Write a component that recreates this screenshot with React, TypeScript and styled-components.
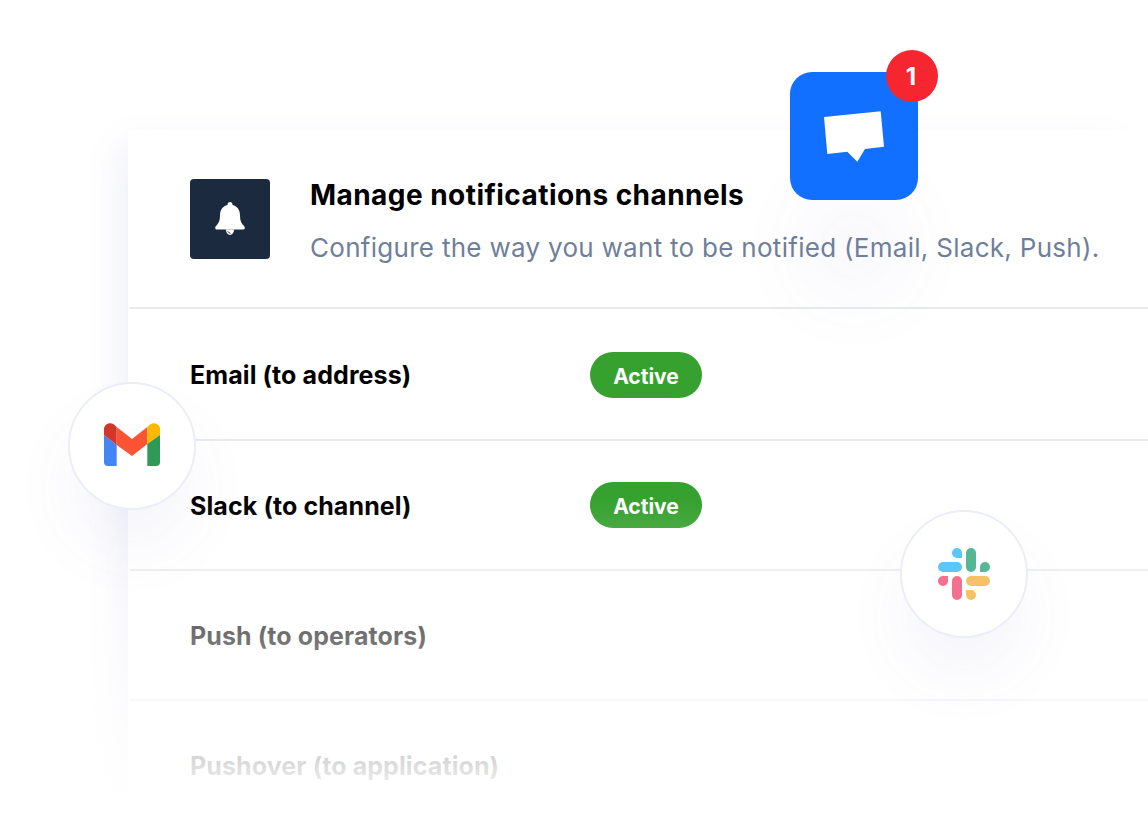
import React from "react";
import styled, { createGlobalStyle } from "styled-components";

const Global = createGlobalStyle`
  html, body { margin: 0; padding: 0; background: #fff; }
  body { font-family: Inter, "Liberation Sans", sans-serif; }
`;

const Page = styled.div`
  position: relative;
  width: 1148px;
  height: 820px;
  overflow: hidden;
  background: #fff;
  padding: 130px 0 0 128px;
  box-sizing: border-box;
`;

const Card = styled.section`
  display: flex;
  flex-direction: column;
  height: 760px;
  padding-left: 2px;
  background: #fff;
  box-shadow: -20px 0 36px -16px rgba(95, 105, 190, 0.12);
`;

const Header = styled.header`
  display: flex;
  align-items: flex-start;
  gap: 40px;
  height: 177px;
  padding: 49px 0 0 60px;
  box-sizing: border-box;
`;

const IconTile = styled.div`
  flex: none;
  display: flex;
  align-items: center;
  justify-content: center;
  width: 80px;
  height: 80px;
  border-radius: 4px;
  background: #1c2a40;
`;

const HeaderText = styled.div`
  display: flex;
  flex-direction: column;
  gap: 21px;
  white-space: nowrap;
`;

const Title = styled.h1`
  margin: 0;
  font-size: 28px;
  line-height: 32px;
  letter-spacing: 0.45px;
  font-weight: 700;
  color: #000;
`;

const Subtitle = styled.p`
  margin: 0;
  font-size: 26px;
  line-height: 32px;
  letter-spacing: 0.29px;
  font-weight: 400;
  color: #6f7f9b;
`;

const Row = styled.div<{ $h: number; $pt?: number }>`
  display: flex;
  align-items: center;
  height: ${(p) => p.$h}px;
  box-sizing: border-box;
  border-top: 2px solid #e8eaf0;
  padding: ${(p) => p.$pt ?? 0}px 0 0 60px;
`;

const Label = styled.div<{ $mt: number }>`
  width: 400px;
  flex: none;
  margin-top: ${(p) => p.$mt}px;
  font-size: 25px;
  line-height: 30px;
  letter-spacing: 0.1px;
  font-weight: 700;
  color: #000;
`;

const Badge = styled.span`
  display: flex;
  align-items: center;
  justify-content: center;
  width: 112px;
  height: 46px;
  box-sizing: border-box;
  padding-top: 2px;
  border-radius: 23px;
  background: #36a12f;
  color: #fff;
  font-size: 21px;
  font-weight: 700;
`;

const Fade = styled.div`
  position: absolute;
  left: 0;
  right: 0;
  top: 500px;
  height: 320px;
  background: linear-gradient(to bottom, rgba(255,255,255,0) 0, rgba(255,255,255,1) 96%);
  pointer-events: none;
`;

const AppTile = styled.div`
  position: absolute;
  left: 790px;
  top: 72px;
  width: 128px;
  height: 128px;
  border-radius: 22px;
  background: #1170ff;
  display: flex;
  align-items: center;
  justify-content: center;
  box-shadow: 0 110px 80px -18px rgba(95, 105, 190, 0.06);
`;

const Counter = styled.div`
  position: absolute;
  left: 96px;
  top: -22px;
  width: 52px;
  height: 52px;
  box-sizing: border-box;
  padding-right: 2px;
  border-radius: 50%;
  background: #f5262f;
  color: #fff;
  font-size: 24px;
  font-weight: 700;
  display: flex;
  align-items: center;
  justify-content: center;
`;

const Round = styled.div<{ $x: number; $y: number }>`
  position: absolute;
  left: ${(p) => p.$x}px;
  top: ${(p) => p.$y}px;
  width: 128px;
  height: 128px;
  box-sizing: border-box;
  border-radius: 50%;
  background: #fff;
  border: 2px solid #eceef7;
  display: flex;
  align-items: center;
  justify-content: center;
  box-shadow: 0 40px 70px -6px rgba(95, 105, 190, 0.07);
`;

const GmailMark = styled.svg`
  margin-bottom: 3px;
`;

const Bell = () => (
  <svg width="30" height="34" viewBox="0 0 30 34" aria-hidden="true">
    <path
      fill="#fff"
      d="M15 0c1.4 0 2.500 1.100 2.500 2.600v.5C22.600 4.300 25 8.500 25 13.500c0 5 1.200 8 4.200 10.700.9.800 1 3.300-.9 3.300H1.700c-1.900 0-1.800-2.500-.9-3.300C3.800 21.500 5 18.500 5 13.500c0-5 2.400-9.200 7.500-10.400v-.5C12.500 1.100 13.600 0 15 0z"
    />
    <path fill="#fff" d="M10.800 27.500h8.400c-.3 3.300-2.100 5.500-4.200 5.500s-3.900-2.200-4.200-5.500z" />
    <path fill="none" stroke="#1c2a40" strokeWidth="1" d="M12.800 29.300c.5 1 1.300 1.700 2.600 2" />
  </svg>
);

const Chat = () => (
  <svg width="60" height="51" viewBox="0 0 60 50.400" aria-hidden="true">
    <path fill="#fff" d="M0 5.700 56.700 0 60 35.400 41 37.700 33.300 50.400 23.300 40.400 3.300 42.700z" />
  </svg>
);

const Gmail = () => (
  <GmailMark width="56" height="43" viewBox="0 0 56 43" aria-hidden="true">
    <path fill="#4285f4" d="M0 12 12.700 22V43H4a4 4 0 0 1-4-4z" />
    <path fill="#d1372a" d="M0 12V6C0 1 6-1.500 10 1.500L12.700 4V22z" />
    <path fill="#fb5434" d="M12.700 4 28 16 43.300 4V21L28 33 12.700 22z" />
    <path fill="#fdb900" d="M43.300 4 46 1.500C50-1.500 56 1 56 6V12L43.300 21z" />
    <path fill="#2f9a58" d="M43.300 21 56 12V39a4 4 0 0 1-4 4H43.300z" />
  </GmailMark>
);

const Slack = () => (
  <svg width="52" height="52" viewBox="0 0 52 52" aria-hidden="true">
    <rect fill="#5cc6f5" x="0" y="14" width="24" height="10" rx="5" />
    <path fill="#5cc6f5" d="M19 0a5 5 0 0 1 5 5v5h-5a5 5 0 0 1 0-10z" />
    <rect fill="#56b794" x="28" y="0" width="10" height="24" rx="5" />
    <path fill="#56b794" d="M52 19a5 5 0 0 1-5 5h-5v-5a5 5 0 0 1 10 0z" />
    <rect fill="#f5708f" x="14" y="28" width="10" height="24" rx="5" />
    <path fill="#f5708f" d="M0 33a5 5 0 0 1 5-5h5v5a5 5 0 0 1-10 0z" />
    <rect fill="#f7c265" x="28" y="28" width="24" height="10" rx="5" />
    <path fill="#f7c265" d="M33 52a5 5 0 0 1-5-5v-5h5a5 5 0 0 1 0 10z" />
  </svg>
);

export default function App() {
  return (
    <Page>
      <Global />
      <Card>
        <Header>
          <IconTile>
            <Bell />
          </IconTile>
          <HeaderText>
            <Title>Manage notifications channels</Title>
            <Subtitle>Configure the way you want to be notified (Email, Slack, Push).</Subtitle>
          </HeaderText>
        </Header>
        <Row $h={132} $pt={2}>
          <Label $mt={0}>Email (to address)</Label>
          <Badge>Active</Badge>
        </Row>
        <Row $h={130}>
          <Label $mt={2}>Slack (to channel)</Label>
          <Badge>Active</Badge>
        </Row>
        <Row $h={130}>
          <Label $mt={2}>Push (to operators)</Label>
        </Row>
        <Row $h={130}>
          <Label $mt={2}>Pushover (to application)</Label>
        </Row>
      </Card>
      <Fade />
      <AppTile>
        <Chat />
        <Counter>1</Counter>
      </AppTile>
      <Round $x={68} $y={382}>
        <Gmail />
      </Round>
      <Round $x={900} $y={510}>
        <Slack />
      </Round>
    </Page>
  );
}
